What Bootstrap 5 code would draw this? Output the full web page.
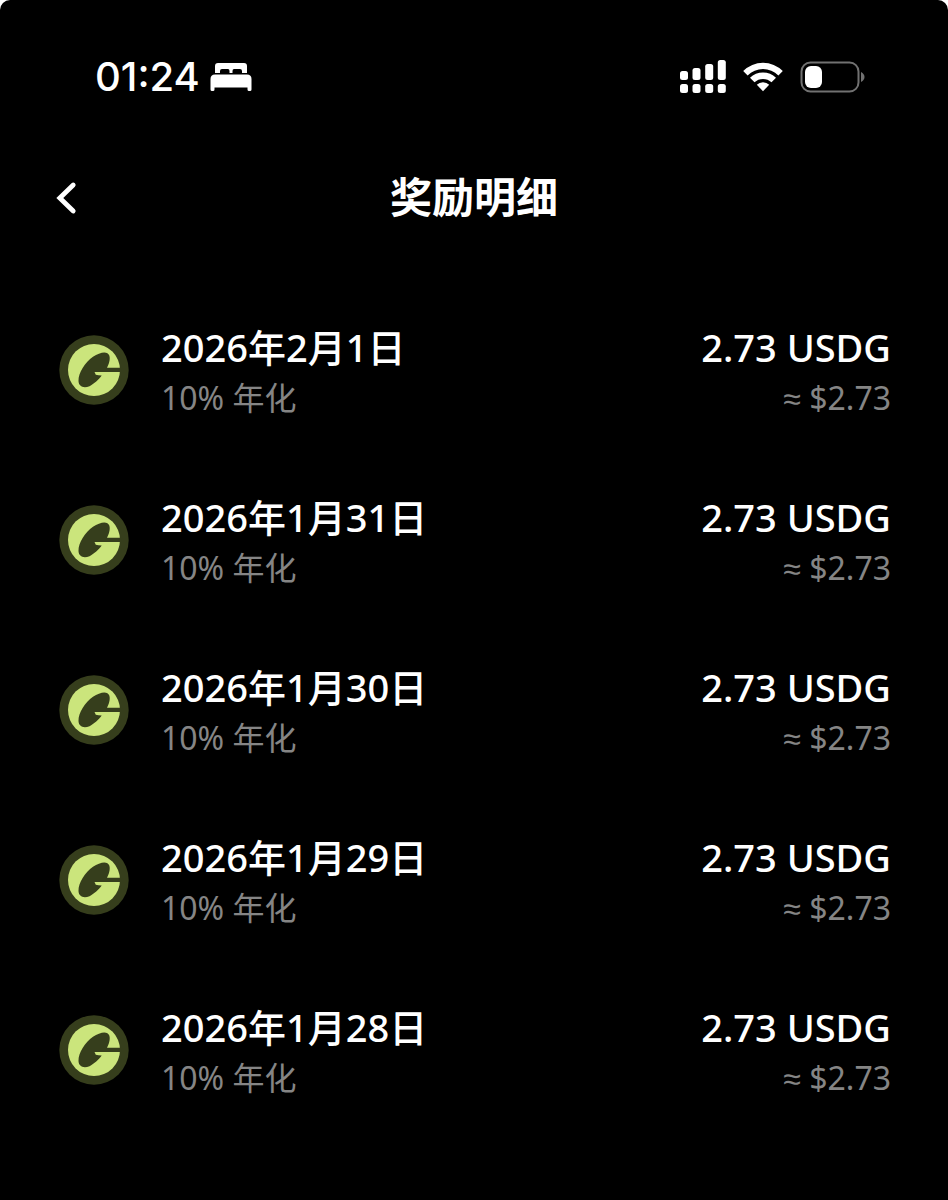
<!DOCTYPE html>
<html lang="zh-CN">
<head>
<meta charset="utf-8">
<meta name="viewport" content="width=device-width, initial-scale=1">
<title>奖励明细</title>
<link href="https://cdn.jsdelivr.net/npm/bootstrap@5.3.0/dist/css/bootstrap.min.css" rel="stylesheet">
<style>
html { background: #fff; }
body { background: transparent; font-family: "Noto Sans", "Liberation Sans", "Noto Sans CJK SC", sans-serif; }
.screen { background: #000; color: #fff; border-radius: 10px 10px 0 0; }
.status-bar { padding: 52px 83px 0 95px; }
.clock { font: 500 40px/50px "Inter", sans-serif; }
.page-head { padding: 66px 56px 64px; display: grid; grid-template-columns: 48px 1fr 48px; }
.page-head h1 { font-family: "Noto Sans CJK SC", sans-serif; font-size: 42px; line-height: 54px; font-weight: 700; }
.back { width: 48px; height: 60px; }
.reward { padding: 29px 57px 39px 59px; }
.coin { width: 70px; height: 70px; margin-top: 14px; margin-right: 32px; }
.line-main { font-size: 38px; line-height: 52px; height: 52px; font-weight: 500; }
.line-sub { font-size: 32px; line-height: 50px; height: 50px; font-weight: 400; color: #858585; }
</style>
</head>
<body>
<svg class="d-none" aria-hidden="true">
  <symbol id="coin" viewBox="0 0 70 70">
    <circle cx="35" cy="35" r="34.7" fill="#363e1c"/>
    <circle cx="35" cy="35" r="26" fill="#cbe57c"/>
    <path fill="#363e1c" d="M50.300 20.500C51.500 24 50 29 48 32.800H61V37H35.500L36.800 39.800Q39 40.500 42.700 40.600C40 44.500 35 49 30.500 51.200C24.500 53.500 19.800 51.500 19.500 46C19.300 38 26 27.500 34 21.800C41 17 48.500 15.500 50.300 20.500Z"/>
  </symbol>
</svg>
<div class="screen min-vh-100">
  <div class="status-bar d-flex justify-content-between">
    <div class="d-flex align-items-center">
      <span class="clock">01:24</span>
      <svg class="ms-2" width="46" height="30" viewBox="1 1 46 30" fill="#fff" role="img" aria-label="睡眠">
        <path d="M8 12V5Q8 2 11 2H37Q40 2 40 5V12H35V10Q35 8 33 8H27Q25.500 8 25.500 10V12H22.500V10Q22.500 8 21 8H15Q13 8 13 10V12Z"/>
        <path d="M3.500 18Q3.500 13.500 8 13.500H40Q44.500 13.500 44.500 18V28.500Q44.500 30 43 30H42Q40.500 30 40.500 28.500V26.500H7.500V28.500Q7.500 30 6 30H5Q3.500 30 3.500 28.500Z"/>
      </svg>
    </div>
    <svg width="186" height="50" viewBox="0 0 186 50" role="img" aria-label="信号、无线网络、电池">
      <g fill="#fff">
        <rect x="1" y="19" width="8" height="9" rx="2.500"/><rect x="13.500" y="16" width="8" height="12" rx="2.500"/><rect x="26.200" y="12" width="8" height="16" rx="2.500"/><rect x="38.800" y="8" width="8" height="20" rx="2.500"/>
        <rect x="1" y="32" width="8" height="9" rx="2.500"/><rect x="13.500" y="32" width="8" height="9" rx="2.500"/><rect x="26.200" y="32" width="8" height="9" rx="2.500"/><rect x="38.800" y="32" width="8" height="9" rx="2.500"/>
        <path d="M64.200 19A28 28 0 0 1 103.800 19L99.400 23.400A22 22 0 0 0 68.600 23.400Z"/>
        <path d="M71 25.800A18.500 18.500 0 0 1 97 25.800L92.500 30.300A12.400 12.400 0 0 0 75.500 30.300Z"/>
        <path d="M77.800 32.800A8.800 8.800 0 0 1 90.200 32.800L84 39.200Z"/>
      </g>
      <rect x="122.500" y="10.500" width="57" height="29" rx="9" fill="none" stroke="#717171" stroke-width="2"/>
      <rect x="126" y="14" width="17" height="22" rx="6" fill="#fff"/>
      <path d="M182 20Q185.500 22 185.500 25T182 30Z" fill="#717171"/>
    </svg>
  </div>
  <header class="page-head">
    <button type="button" class="back btn p-0 border-0 text-start" aria-label="返回">
      <svg class="d-block" width="22" height="34" viewBox="0 0 22 34" fill="none" stroke="#fff" stroke-width="4.800" stroke-linecap="round"><path d="M17.200 4L3.800 17L17.200 30"/></svg>
    </button>
    <h1 class="text-center mb-0">奖励明细</h1>
  </header>
  <main>
    <ul class="list-unstyled mb-0">
      <li class="reward d-flex">
        <svg class="coin flex-shrink-0" aria-hidden="true"><use href="#coin"/></svg>
        <div class="flex-grow-1"><div class="line-main">2026年2月1日</div><div class="line-sub">10% 年化</div></div>
        <div class="text-end"><div class="line-main">2.73 USDG</div><div class="line-sub">≈ $2.73</div></div>
      </li>
      <li class="reward d-flex">
        <svg class="coin flex-shrink-0" aria-hidden="true"><use href="#coin"/></svg>
        <div class="flex-grow-1"><div class="line-main">2026年1月31日</div><div class="line-sub">10% 年化</div></div>
        <div class="text-end"><div class="line-main">2.73 USDG</div><div class="line-sub">≈ $2.73</div></div>
      </li>
      <li class="reward d-flex">
        <svg class="coin flex-shrink-0" aria-hidden="true"><use href="#coin"/></svg>
        <div class="flex-grow-1"><div class="line-main">2026年1月30日</div><div class="line-sub">10% 年化</div></div>
        <div class="text-end"><div class="line-main">2.73 USDG</div><div class="line-sub">≈ $2.73</div></div>
      </li>
      <li class="reward d-flex">
        <svg class="coin flex-shrink-0" aria-hidden="true"><use href="#coin"/></svg>
        <div class="flex-grow-1"><div class="line-main">2026年1月29日</div><div class="line-sub">10% 年化</div></div>
        <div class="text-end"><div class="line-main">2.73 USDG</div><div class="line-sub">≈ $2.73</div></div>
      </li>
      <li class="reward d-flex">
        <svg class="coin flex-shrink-0" aria-hidden="true"><use href="#coin"/></svg>
        <div class="flex-grow-1"><div class="line-main">2026年1月28日</div><div class="line-sub">10% 年化</div></div>
        <div class="text-end"><div class="line-main">2.73 USDG</div><div class="line-sub">≈ $2.73</div></div>
      </li>
    </ul>
  </main>
</div>
<script src="https://cdn.jsdelivr.net/npm/bootstrap@5.3.0/dist/js/bootstrap.bundle.min.js"></script>
</body>
</html>
